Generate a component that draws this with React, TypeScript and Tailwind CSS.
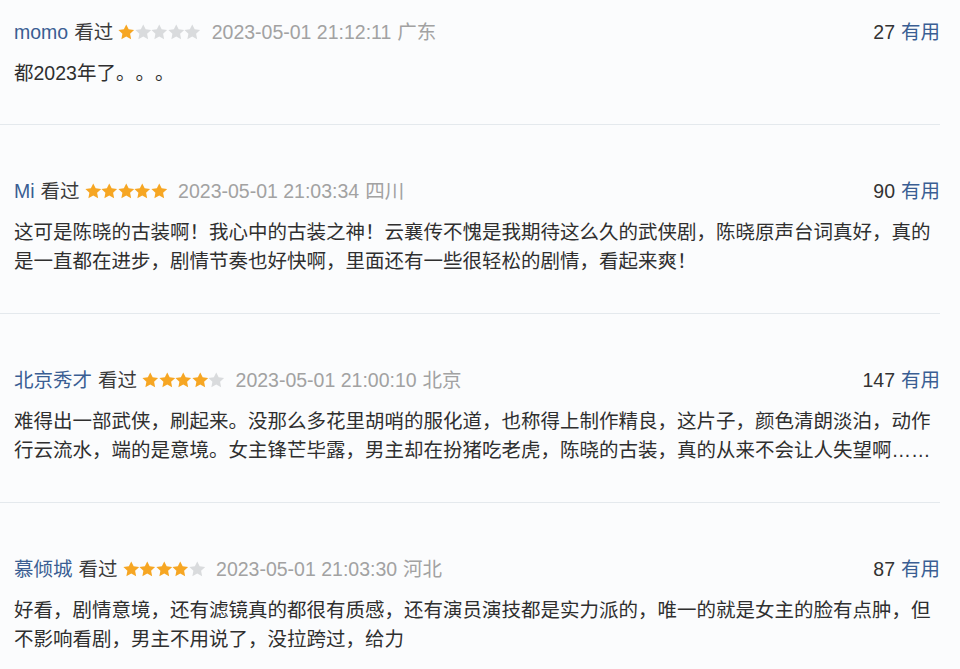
const reviews = [
  {
    name: "momo",
    stars: 1,
    time: "2023-05-01 21:12:11",
    place: "广东",
    useful: 27,
    lines: ["都2023年了。。。"],
  },
  {
    name: "Mi",
    stars: 5,
    time: "2023-05-01 21:03:34",
    place: "四川",
    useful: 90,
    lines: [
      "这可是陈晓的古装啊！我心中的古装之神！云襄传不愧是我期待这么久的武侠剧，陈晓原声台词真好，真的",
      "是一直都在进步，剧情节奏也好快啊，里面还有一些很轻松的剧情，看起来爽！",
    ],
  },
  {
    name: "北京秀才",
    stars: 4,
    time: "2023-05-01 21:00:10",
    place: "北京",
    useful: 147,
    lines: [
      "难得出一部武侠，刷起来。没那么多花里胡哨的服化道，也称得上制作精良，这片子，颜色清朗淡泊，动作",
      "行云流水，端的是意境。女主锋芒毕露，男主却在扮猪吃老虎，陈晓的古装，真的从来不会让人失望啊……",
    ],
  },
  {
    name: "慕倾城",
    stars: 4,
    time: "2023-05-01 21:03:30",
    place: "河北",
    useful: 87,
    lines: [
      "好看，剧情意境，还有滤镜真的都很有质感，还有演员演技都是实力派的，唯一的就是女主的脸有点肿，但",
      "不影响看剧，男主不用说了，没拉跨过，给力",
    ],
  },
];

function Star({ on }: { on: boolean }) {
  return (
    <svg viewBox="0 0 24 24" className="w-[16.5px] h-[16.5px]">
      <path
        d="M12 0.6l3.5 7.2 7.9 1-5.8 5.4 1.5 7.8-7.1-3.9-7.1 3.9 1.5-7.8-5.8-5.4 7.9-1z"
        fill={on ? "#f6a623" : "#d9dbdd"}
      />
    </svg>
  );
}

export default function App() {
  return (
    <div
      className="w-[960px] h-[669px] overflow-hidden bg-[#fbfcfd] text-[19.5px] text-[#333] [text-spacing-trim:space-all]"
      style={{ fontFamily: '"Liberation Sans", "Noto Sans CJK SC", sans-serif' }}
    >
      <div className="w-[940px]">
        {reviews.map((r, i) => (
          <div
            key={i}
            className={
              i === 0
                ? "pt-[18px] pb-[36px] border-b border-[#e4e9ed]"
                : "pt-[52px] pb-[37px] border-b border-[#e4e9ed]"
            }
          >
            <div className="pl-[14px] flex items-center justify-between h-[28px] leading-[28px]">
              <div className="flex items-center">
                <span className="text-[#3a5e93]">{r.name}</span>
                <span className="ml-[6px] text-[#3b3b3b]">看过</span>
                <span className="ml-[5px] flex items-center">
                  {[0, 1, 2, 3, 4].map((s) => (
                    <Star key={s} on={s < r.stars} />
                  ))}
                </span>
                <span className="ml-[11px] text-[#a2a2a2]">{r.time}</span>
                <span className="ml-[6px] text-[#a2a2a2]">{r.place}</span>
              </div>
              <div className="flex items-center">
                <span className="text-[#333]">{r.useful}</span>
                <span className="ml-[6px] text-[#3a5e93]">有用</span>
              </div>
            </div>
            <div className="pl-[14px] mt-[13px] leading-[29px] text-[#2f2f2f] whitespace-nowrap">
              {r.lines.map((l, j) => (
                <div key={j}>{l}</div>
              ))}
            </div>
          </div>
        ))}
      </div>
    </div>
  );
}
